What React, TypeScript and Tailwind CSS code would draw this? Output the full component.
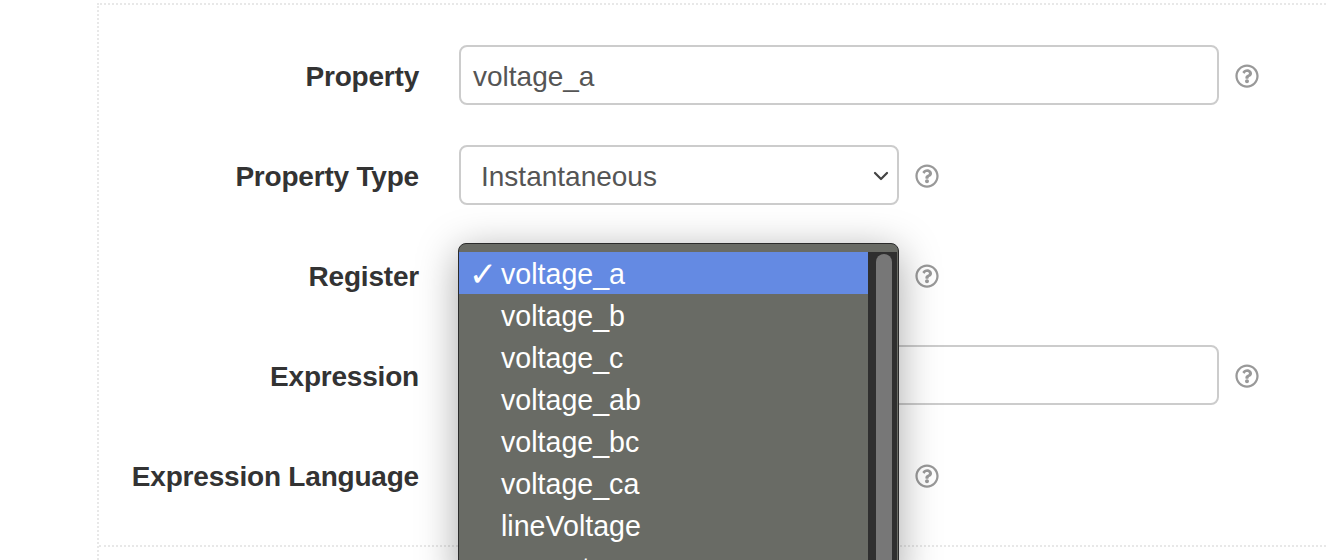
import React from 'react';
import { ChevronDown } from 'lucide-react';
import { FaRegQuestionCircle } from 'react-icons/fa';

const registers = [
  'voltage_a',
  'voltage_b',
  'voltage_c',
  'voltage_ab',
  'voltage_bc',
  'voltage_ca',
  'lineVoltage',
  'current_a',
];

const Help = () => (
  <FaRegQuestionCircle size={24} className="mt-[2px] ml-px shrink-0 text-[#999]" />
);

const Row = ({ label, children }: { label: string; children: React.ReactNode }) => (
  <div className="flex h-[60px] items-center">
    <label className="w-[319px] shrink-0 pt-1 text-right text-[28px] font-bold tracking-[-0.2px] text-[#333]">
      {label}
    </label>
    <div className="ml-10 flex items-center gap-[15px]">{children}</div>
  </div>
);

const TextBox = ({ value }: { value?: string }) => (
  <div className="flex h-[60px] w-[760px] items-center rounded-lg border-2 border-[#ccc] bg-white px-3 pt-1 text-[28px] text-[#555]">
    {value}
  </div>
);

const SelectBox = ({ value }: { value?: string }) => (
  <div className="flex h-[60px] w-[440px] items-center justify-between rounded-lg border-2 border-[#ccc] bg-white pl-5 pr-1 text-[28px] text-[#555]">
    <span className="pt-1">{value}</span>
    <ChevronDown size={24} strokeWidth={2.25} className="mt-px shrink-0 text-[#444]" />
  </div>
);

const RegisterMenu = () => (
  <div className="absolute top-[243px] left-[458px] h-[340px] w-[441px] overflow-hidden rounded-lg border border-[#2b2b2b] bg-[#696b65] pt-2 text-[28.6px] text-white shadow-[0_8px_40px_rgba(0,0,0,0.35)]">
    <div className="flex h-full">
      <ul className="w-[409px] shrink-0">
        {registers.map((r, i) => (
          <li
            key={r}
            className={`flex h-[42px] items-center ${i === 0 ? 'bg-[#648ae3]' : ''}`}
          >
            <span
              className="mt-[2px] flex w-[42px] justify-center pl-[6px] text-[34px] leading-none"
              style={{ fontFamily: '"DejaVu Sans", sans-serif' }}
            >
              {i === 0 && '✓'}
            </span>
            <span className="pt-[3px]">{r}</span>
          </li>
        ))}
      </ul>
      <div className="w-[29px] shrink-0 bg-[#2f2f2f] pt-[2px] pl-2">
        <div className="h-full w-4 rounded-t-lg bg-[#777]" />
      </div>
    </div>
  </div>
);

export default function App() {
  return (
    <div
      className="relative h-[560px] overflow-hidden bg-white pt-[3px] pl-[97px]"
      style={{ fontFamily: '"Liberation Sans", Arial, sans-serif' }}
    >
      <div className="h-full border-t-2 border-l-2 border-dotted border-[#e8e8e8]">
        <div className="flex h-[542px] flex-col gap-10 border-b-2 border-dotted border-[#e8e8e8] pt-10 pl-px">
          <Row label="Property">
            <TextBox value="voltage_a" />
            <Help />
          </Row>
          <Row label="Property Type">
            <SelectBox value="Instantaneous" />
            <Help />
          </Row>
          <Row label="Register">
            <SelectBox />
            <Help />
          </Row>
          <Row label="Expression">
            <TextBox />
            <Help />
          </Row>
          <Row label="Expression Language">
            <SelectBox />
            <Help />
          </Row>
        </div>
      </div>
      <RegisterMenu />
    </div>
  );
}
